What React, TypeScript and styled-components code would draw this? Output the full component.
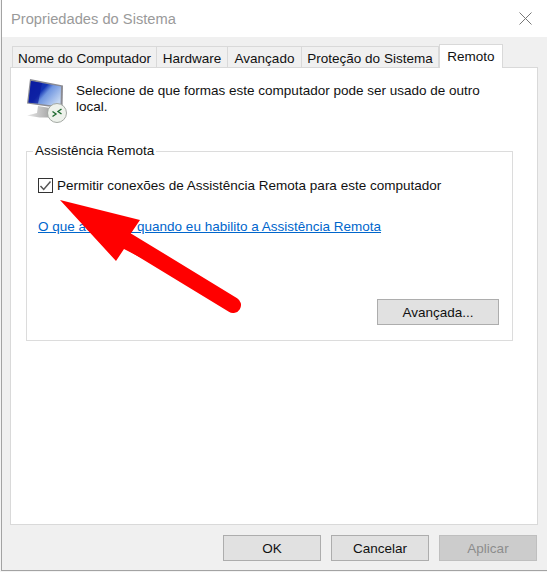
import React from 'react';
import styled, { createGlobalStyle } from 'styled-components';

const GlobalStyle = createGlobalStyle`
  html, body {
    margin: 0;
    padding: 0;
    background: #fff;
    overflow: hidden;
  }
  #root {
    width: 547px;
    height: 572px;
  }
`;

const Screen = styled.div`
  position: relative;
  width: 547px;
  height: 572px;
  padding: 0 0 1px 1px;
  box-sizing: border-box;
  background: #f4f4f4;
  font-family: "Liberation Sans", Arial, sans-serif;
  font-size: 13.5px;
  color: #111;
`;

const Window = styled.div`
  display: flex;
  flex-direction: column;
  height: 100%;
  box-sizing: border-box;
  border-left: 1px solid #a3a3a3;
  border-bottom: 1px solid #a3a3a3;
  background: #f0f0f0;
`;

const TitleBar = styled.div`
  flex: none;
  display: flex;
  align-items: center;
  justify-content: space-between;
  height: 37px;
  padding: 0 15px 0 9px;
  background: #fff;
`;

const Title = styled.span`
  font-size: 14.7px;
  color: #9a9a9a;
`;

const Body = styled.div`
  flex: 1;
  display: flex;
  flex-direction: column;
  padding: 8px 9px 0 8px;
`;

const TabStrip = styled.div`
  display: flex;
  align-items: flex-end;
  height: 23px;
  padding-left: 2px;
  position: relative;
  z-index: 1;
  margin-bottom: -1px;
`;

const Tab = styled.div<{ $width: number; $active?: boolean }>`
  box-sizing: border-box;
  width: ${p => p.$width}px;
  height: ${p => (p.$active ? 24 : 22)}px;
  padding-top: 4px;
  line-height: 15px;
  text-align: center;
  white-space: nowrap;
  background: ${p => (p.$active ? '#fff' : '#f0f0f0')};
  border: 1px solid #d9d9d9;
  border-left-width: ${p => (p.$active ? 1 : 0)}px;
  border-bottom: ${p => (p.$active ? '0' : '1px solid #d9d9d9')};
  &:first-child {
    border-left-width: 1px;
  }
`;

const Panel = styled.div`
  box-sizing: border-box;
  height: 458px;
  padding: 11px 24px 0 15px;
  background: #fff;
  border: 1px solid #d9d9d9;
`;

const Intro = styled.div`
  display: flex;
  gap: 8px;
  height: 64px;
`;

const IntroText = styled.p`
  margin: 4px 0 0;
  width: 420px;
  line-height: 16px;
`;

const GroupBox = styled.fieldset`
  box-sizing: border-box;
  height: 198px;
  margin: 0;
  padding: 19px 13px 0 11px;
  border: 1px solid #dcdcdc;
`;

const GroupTitle = styled.legend`
  margin-left: -5px;
  padding: 0 2px;
  line-height: 16px;
`;

const CheckRow = styled.label`
  display: flex;
  align-items: center;
  gap: 4px;
  height: 15px;
`;

const CheckBox = styled.span`
  flex: none;
  box-sizing: border-box;
  display: flex;
  align-items: center;
  justify-content: center;
  width: 15px;
  height: 15px;
  background: #fff;
  border: 1px solid #333;
`;

const HelpLink = styled.a`
  display: block;
  margin-top: 26px;
  line-height: 16px;
  color: #0066cc;
  text-decoration: underline;
`;

const GroupActions = styled.div`
  display: flex;
  justify-content: flex-end;
  margin-top: 64px;
`;

const Button = styled.button<{ $width: number; $disabled?: boolean }>`
  box-sizing: border-box;
  width: ${p => p.$width}px;
  height: 26px;
  padding: 0;
  font: inherit;
  color: ${p => (p.$disabled ? '#8c8c8c' : '#111')};
  background: ${p => (p.$disabled ? '#cccccc' : '#e1e1e1')};
  border: 1px solid ${p => (p.$disabled ? '#bfbfbf' : '#adadad')};
`;

const Footer = styled.div`
  display: flex;
  justify-content: flex-end;
  gap: 10px;
  margin-top: 10px;
  margin-right: 1px;
`;

const ArrowOverlay = styled.svg`
  position: absolute;
  left: 0;
  top: 0;
  pointer-events: none;
`;

const CloseIcon = () => (
  <svg width="13" height="13" viewBox="0 0 13 13">
    <path d="M.5.5l12 12M12.5.5l-12 12" stroke="#777" strokeWidth="1" fill="none" />
  </svg>
);

const RemoteIcon = () => (
  <svg width="42" height="44" viewBox="0 0 42 44" style={{ flex: 'none' }}>
    <defs>
      <linearGradient id="scr" x1="0" y1="0" x2="1" y2="0.7">
        <stop offset="0" stopColor="#0a1fa8" />
        <stop offset="0.45" stopColor="#1434b4" />
        <stop offset="0.6" stopColor="#6f95e0" />
        <stop offset="1" stopColor="#c3d6f2" />
      </linearGradient>
      <linearGradient id="stand" x1="0" y1="0" x2="1" y2="0">
        <stop offset="0" stopColor="#e8e8e8" />
        <stop offset="1" stopColor="#9a9a9a" />
      </linearGradient>
    </defs>
    <path d="M4 0l33 6.500-.5 23L1 24.500z" fill="#8b8b93" />
    <path d="M5 2l30 5.500-.500 20L2.500 23.500z" fill="url(#scr)" />
    <path d="M5 2l11 2-4 20.500-9.500-1z" fill="#0b1a9c" opacity="0.7" />
    <path d="M12 27l12 2 .5 5 4 2.500-1 2H13.500L1 36.500l10-2.500z" fill="url(#stand)" />
    <circle cx="31" cy="34" r="9.500" fill="#eef2ec" stroke="#a3a8a3" />
    <path d="M26.500 32.500l3.500 2.500-3.500 2.500M35.500 30l-3.500 2.500 3.500 2.500" stroke="#1f6b30" strokeWidth="1.400" fill="none" />
  </svg>
);

const CheckMark = () => (
  <svg width="13" height="13" viewBox="0 0 13 13">
    <path d="M1.500 7l3.200 3.400L11.500 2.500" stroke="#555" strokeWidth="1.500" fill="none" />
  </svg>
);

const tabs = [
  { label: 'Nome do Computador', width: 145 },
  { label: 'Hardware', width: 71 },
  { label: 'Avançado', width: 74 },
  { label: 'Proteção do Sistema', width: 137 },
  { label: 'Remoto', width: 64, active: true },
];

const App: React.FC = () => (
  <Screen>
    <GlobalStyle />
    <Window>
      <TitleBar>
        <Title>Propriedades do Sistema</Title>
        <CloseIcon />
      </TitleBar>
      <Body>
        <TabStrip>
          {tabs.map(tab => (
            <Tab key={tab.label} $width={tab.width} $active={tab.active}>
              {tab.label}
            </Tab>
          ))}
        </TabStrip>
        <Panel>
          <Intro>
            <RemoteIcon />
            <IntroText>
              Selecione de que formas este computador pode ser usado de outro local.
            </IntroText>
          </Intro>
          <GroupBox>
            <GroupTitle>Assistência Remota</GroupTitle>
            <CheckRow>
              <CheckBox>
                <CheckMark />
              </CheckBox>
              Permitir conexões de Assistência Remota para este computador
            </CheckRow>
            <HelpLink>O que acontece quando eu habilito a Assistência Remota</HelpLink>
            <GroupActions>
              <Button $width={122}>Avançada...</Button>
            </GroupActions>
          </GroupBox>
        </Panel>
        <Footer>
          <Button $width={98}>OK</Button>
          <Button $width={98}>Cancelar</Button>
          <Button $width={98} $disabled>Aplicar</Button>
        </Footer>
      </Body>
    </Window>
    <ArrowOverlay width="547" height="572" viewBox="0 0 547 572">
      <path d="M60 200L140 220L130.500 234L233 305L124 249L116 261z" fill="#ff0000" />
      <path d="M128 241L233 305" stroke="#ff0000" strokeWidth="16" strokeLinecap="round" />
    </ArrowOverlay>
  </Screen>
);

export default App;
